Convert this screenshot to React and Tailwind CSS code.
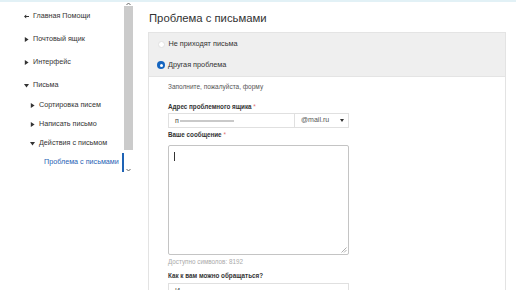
import React from "react";

const Tri = ({ down }) => (
  <svg width="5" height="5" viewBox="0 0 5 5" className="shrink-0">
    {down ? (
      <path d="M0 1h5L2.5 4.5z" fill="#333" />
    ) : (
      <path d="M0.8 0v5l3.8-2.5z" fill="#333" />
    )}
  </svg>
);

const Back = () => (
  <svg width="5" height="5" viewBox="0 0 5 5" className="shrink-0">
    <path d="M0 2.5L2.2 0.4v1.5H5v1.2H2.2v1.5z" fill="#333" />
  </svg>
);

const Item = ({ icon, children, sub, h = "h-[23px]" }) => (
  <div className={`flex items-center gap-[4px] ${h} ${sub ? "pl-[30px]" : "pl-[24px]"}`}>
    {icon}
    <span className="text-[7.2px] text-[#333] whitespace-nowrap">{children}</span>
  </div>
);

const Redacted = ({ letter, w }) => (
  <div className="flex items-center h-full pl-[6px]">
    <span className="text-[7px] text-[#444] leading-none">{letter}</span>
    <span className="h-[2px] bg-[#c9c9c9] ml-[1px]" style={{ width: w }} />
  </div>
);

export default function App() {
  return (
    <div
      className="w-[516px] h-[290px] overflow-hidden bg-white border-t-2 border-[#e2f1f6] flex"
      style={{ fontFamily: '"Liberation Sans", Arial, sans-serif' }}
    >
      {/* Sidebar */}
      <div className="flex shrink-0">
        <nav className="w-[124px] pt-[3px]">
          <Item icon={<Back />}>Главная Помощи</Item>
          <Item icon={<Tri />}>Почтовый ящик</Item>
          <Item icon={<Tri />}>Интерфейс</Item>
          <Item icon={<Tri down />} h="h-[22px]">Письма</Item>
          <Item icon={<Tri />} sub h="h-[19px]">Сортировка писем</Item>
          <Item icon={<Tri />} sub h="h-[19px]">Написать письмо</Item>
          <Item icon={<Tri down />} sub h="h-[19px]">Действия с письмом</Item>
          <div className="flex items-center h-[19px] pl-[44px] border-r-2 border-[#1f63b5]">
            <span className="text-[7.2px] text-[#1f63b5] whitespace-nowrap">Проблема с письмами</span>
          </div>
        </nav>
        <div className="w-[9px] flex flex-col items-center">
          <svg width="5" height="4" viewBox="0 0 5 4" className="mt-[0px]">
            <path d="M0.5 3L2.5 1L4.5 3" stroke="#666" strokeWidth="1" fill="none" />
          </svg>
          <div className="w-full h-[144px] bg-[#cbcbcb]" />
          <svg width="5" height="4" viewBox="0 0 5 4" className="mt-[18px]">
            <path d="M0.5 1L2.5 3L4.5 1" stroke="#666" strokeWidth="1" fill="none" />
          </svg>
        </div>
      </div>

      {/* Main */}
      <main className="flex-1 pl-[15px]">
        <div className="h-[30px] pt-[2px] flex items-center pl-[1px]">
          <h1 className="text-[11.3px] text-[#333] whitespace-nowrap">Проблема с письмами</h1>
        </div>

        <div className="w-[358px] border-x border-[#e3e3e3] h-[300px]">
          <div className="bg-[#efefef] border-y border-[#e4e4e4] pt-[1px] pb-[1px] pl-[8px]">
            <label className="flex items-center gap-[4px] h-[21px]">
              <span className="w-[7px] h-[7px] rounded-full bg-white border border-[#e2e2e2] ml-[0.5px]" />
              <span className="text-[7.3px] text-[#333]">Не приходят письма</span>
            </label>
            <label className="flex items-center gap-[3px] h-[20px]">
              <span className="w-[8px] h-[8px] rounded-full bg-[#1565c0] flex items-center justify-center">
                <span className="w-[3px] h-[3px] rounded-full bg-white" />
              </span>
              <span className="text-[7.3px] text-[#333]">Другая проблема</span>
            </label>
          </div>

          <form className="pl-[19px] pt-[5px]">
            <p className="h-[10px] leading-[10px] text-[6.5px] text-[#555]">
              Заполните, пожалуйста, форму
            </p>

            <div className="mt-[10px] h-[10px] leading-[10px] text-[6.3px] font-bold text-[#333]">
              Адрес проблемного ящика <span className="text-[#e07070] font-normal">*</span>
            </div>
            <div className="mt-[1px] flex h-[15px]">
              <div className="w-[127px] border border-[#e0e0e0]">
                <Redacted letter="п" w="54px" />
              </div>
              <div className="w-[54px] border border-l-0 border-[#e0e0e0] flex items-center justify-between pl-[6px] pr-[4px]">
                <span className="text-[7px] text-[#555]">@mail.ru</span>
                <svg width="4" height="3" viewBox="0 0 4 3">
                  <path d="M0 0h4L2 3z" fill="#333" />
                </svg>
              </div>
            </div>

            <div className="mt-[2px] h-[10px] leading-[10px] text-[6.3px] font-bold text-[#333]">
              Ваше сообщение <span className="text-[#e07070] font-normal">*</span>
            </div>
            <div className="relative mt-[5px] w-[181px] h-[110px] border border-[#c4c4c4] rounded-[2px]">
              <span className="block w-px h-[9px] bg-[#333] ml-[5px] mt-[6px]" />
              <svg width="6" height="6" viewBox="0 0 6 6" className="absolute right-[1px] bottom-[1px]">
                <path d="M5.5 0.5L0.5 5.5M5.5 3L3 5.5" stroke="#999" strokeWidth="0.8" />
              </svg>
            </div>
            <div className="mt-[2px] h-[10px] leading-[10px] text-[6.3px] text-[#aaa]">
              Доступно символов: 8192
            </div>

            <div className="mt-[4px] h-[10px] leading-[10px] text-[6.3px] font-bold text-[#333]">
              Как к вам можно обращаться?
            </div>
            <div className="mt-[2px] w-[181px] h-[15px] border border-[#e0e0e0]">
              <Redacted letter="И" w="44px" />
            </div>
          </form>
        </div>
      </main>
    </div>
  );
}
